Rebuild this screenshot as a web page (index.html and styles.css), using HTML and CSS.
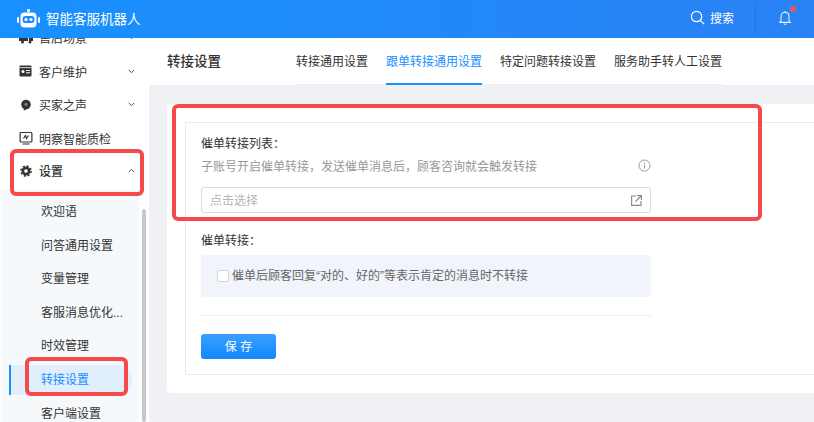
FILE: index.html
```html
<!DOCTYPE html>
<html lang="zh">
<head>
<meta charset="utf-8">
<title>智能客服机器人</title>
<link rel="stylesheet" href="styles.css">
</head>
<body>
<div class="app">
  <header class="topbar">
    <svg class="logo" width="24" height="24" viewBox="0 0 24 24"><rect x="11" y="2" width="3" height="3" rx="1" fill="#fff"/><rect x="4.500" y="5.500" width="16" height="15" rx="4" fill="#fff"/><rect x="1" y="10" width="2" height="6" rx="1" fill="#fff"/><rect x="22" y="10" width="2" height="6" rx="1" fill="#fff"/><rect x="6.500" y="9" width="12" height="7" rx="3" fill="#1b8cfb"/><circle cx="10" cy="12.500" r="1.600" fill="#fff"/><circle cx="15" cy="12.500" r="1.600" fill="#fff"/></svg>
    <span class="brand">智能客服机器人</span>
    <div class="search">
      <svg width="15" height="15" viewBox="0 0 16 16" fill="none" stroke="#fff" stroke-width="1.300"><circle cx="7" cy="7" r="5.500"/><path d="M11 11l4 4"/></svg>
      <span>搜索</span>
    </div>
    <div class="bell">
      <svg width="14" height="16" viewBox="0 0 16 18" fill="none" stroke="#e6f1ff" stroke-width="1.200"><path d="M8 2.500c-3 0-4.500 2.200-4.500 5V12L2 14h12l-1.500-2V7.500c0-2.800-1.500-5-4.500-5z"/><path d="M8 1v1.500M6.500 15.500c.4.800 2.600.800 3 0"/></svg>
      <i class="dot"></i>
    </div>
  </header>
  <div class="body">
    <aside class="sidebar">
      <nav class="menu">
        <a class="item"><svg class="ic" width="14" height="14" viewBox="0 0 14 14"><path d="M0 3h9v7H0zM10 5h3l1 2v3h-4z" fill="#333"/><circle cx="3.500" cy="11" r="1.500" fill="#333"/><circle cx="11" cy="11" r="1.500" fill="#333"/></svg><span>售后场景</span><svg class="chev" width="7" height="5" viewBox="0 0 9 6"><path d="M1 1l3.500 3.500L8 1" fill="none" stroke="#444" stroke-width="1.200"/></svg></a>
        <a class="item"><svg class="ic" width="14" height="14" viewBox="0 -.5 14 14"><rect x=".5" y="1" width="12" height="11" rx="1" fill="#333"/><rect x=".5" y="2.800" width="12" height=".8" fill="#fff"/><circle cx="4" cy="7" r="1.500" fill="#fff"/><rect x="7" y="5.500" width="4" height="1" fill="#fff"/><rect x="7" y="7.800" width="4" height="1" fill="#fff"/></svg><span>客户维护</span><svg class="chev" width="7" height="5" viewBox="0 0 9 6"><path d="M1 1l3.500 3.500L8 1" fill="none" stroke="#444" stroke-width="1.200"/></svg></a>
        <a class="item"><svg class="ic" width="14" height="14" viewBox="-1.500 -1.500 16 16"><circle cx="6.500" cy="6" r="5.500" fill="#333"/><path d="M4 10l0 3 3-2z" fill="#333"/><circle cx="6.500" cy="6" r="1.700" fill="#888"/></svg><span>买家之声</span><svg class="chev" width="7" height="5" viewBox="0 0 9 6"><path d="M1 1l3.500 3.500L8 1" fill="none" stroke="#444" stroke-width="1.200"/></svg></a>
        <a class="item"><svg class="ic" width="14" height="14" viewBox="-.5 -.5 14 14" fill="none" stroke="#333" stroke-width="1.200"><rect x=".6" y="1" width="11.800" height="9.500" rx="1"/><path d="M3 12.500h7M4 7l2-3 1 3 2-3"/></svg><span>明察智能质检</span></a>
        <a class="item open"><svg class="ic" width="14" height="14" viewBox="-1.500 -1.500 16 16"><circle cx="6.500" cy="6.500" r="3.600" fill="none" stroke="#333" stroke-width="3"/><circle cx="6.500" cy="6.500" r="5.800" fill="none" stroke="#333" stroke-width="1.600" stroke-dasharray="2.400 2.150"/></svg><span>设置</span><svg class="chev" width="7" height="5" viewBox="0 0 9 6"><path d="M1 5l3.500-3.500L8 5" fill="none" stroke="#444" stroke-width="1.200"/></svg></a>
        <div class="submenu">
          <a class="sub">欢迎语</a>
          <a class="sub">问答通用设置</a>
          <a class="sub">变量管理</a>
          <a class="sub">客服消息优化...</a>
          <a class="sub">时效管理</a>
          <a class="sub active">转接设置</a>
          <a class="sub">客户端设置</a>
        </div>
      </nav>
      <i class="scroll"></i>
    </aside>
    <main class="main">
      <div class="tabbar">
        <h1 class="title">转接设置</h1>
        <div class="tabs">
          <a class="tab">转接通用设置</a>
          <a class="tab on">跟单转接通用设置</a>
          <a class="tab">特定问题转接设置</a>
          <a class="tab">服务助手转人工设置</a>
        </div>
      </div>
      <section class="card">
        <div class="box">
          <div class="form">
            <div class="label">催单转接列表：</div>
            <div class="hint">
              <span>子账号开启催单转接，发送催单消息后，顾客咨询就会触发转接</span>
              <svg width="13" height="13" viewBox="0 0 13 13" fill="none" stroke="#999"><circle cx="6.500" cy="6.500" r="5.500"/><path d="M6.500 5.500v4M6.500 3.300v1.200"/></svg>
            </div>
            <div class="select">
              <span>点击选择</span>
              <svg width="11" height="11" viewBox="0 0 11 11" fill="none" stroke="#888" stroke-width="1.100"><path d="M5 1H.6v9.400H10V6M6 .6h4.400V5M10.200.8L4.500 6.500"/></svg>
            </div>
            <div class="label second">催单转接：</div>
            <div class="panel">
              <i class="check"></i>
              <span>催单后顾客回复“对的、好的”等表示肯定的消息时不转接</span>
            </div>
            <hr class="rule">
            <button class="save">保 存</button>
          </div>
        </div>
      </section>
    </main>
  </div>
  <i class="mark mark-form"></i>
  <i class="mark mark-set"></i>
  <i class="mark mark-sub"></i>
</div>
</body>
</html>
```

FILE: styles.css
```css
* { box-sizing: border-box; }
html, body { margin: 0; height: 100%; overflow: hidden; }
body { font-family: "Liberation Sans", "Noto Sans CJK SC", sans-serif; font-size: 12px; color: #333; }
a { display: block; }
.app { position: relative; width: 814px; height: 422px; overflow: hidden; display: flex; flex-direction: column; }

.topbar { flex: none; height: 38px; display: flex; align-items: center; padding-left: 16px; background: linear-gradient(90deg, #1890ff, #2a82f3); color: #fff; }
.logo { margin-right: 6px; }
.brand { font-size: 13.500px; padding-bottom: 3px; }
.search { margin-left: auto; display: flex; align-items: center; gap: 5px; font-size: 12px; padding-bottom: 3px; }
.bell { position: relative; width: 59px; height: 30px; margin-left: 21px; border-left: 1px solid #2376e0; display: flex; align-items: center; justify-content: center; padding-bottom: 3px; }
.dot { position: absolute; left: 34px; top: 2px; width: 6px; height: 6px; border-radius: 50%; background: #f5515f; }

.body { flex: 1; min-height: 0; display: flex; }
.sidebar { position: relative; flex: none; width: 149px; background: #fff; overflow: hidden; }
.menu { margin-top: -17px; }
.item { height: 33.500px; display: flex; align-items: center; padding-left: 19px; font-size: 12px; color: #333; }
.item .ic { flex: none; margin-right: 6px; }
.item span { flex: 1; }
.item .chev { margin-right: 14px; }
.open { font-weight: 500; height: 34px; padding-bottom: 3px; }
.submenu { padding-top: 7px; margin-left: 1px; width: 138px; background: #f6f9fc; }
.sub { height: 33.600px; line-height: 33.600px; padding-left: 40px; color: #333; }
.active { width: 123px; margin: 1px 0 3px 8px; padding-left: 30px; height: 30px; line-height: 30px; background: #e0eefd; color: #1890ff; border-radius: 0 15px 15px 0; border-left: 2px solid #1890ff; }
.scroll { position: absolute; left: 142px; top: 171px; width: 4px; height: 213px; border-radius: 2px; background: #c8c8c8; }

.main { flex: 1; min-width: 0; background: #f0f1f5; }
.tabbar { height: 47px; background: #fff; display: flex; align-items: center; padding-left: 18px; }
.title { margin: 0; width: 129px; font-size: 13.500px; font-weight: 500; color: #333; padding-bottom: 4px; }
.tabs { display: flex; height: 47px; gap: 18px; box-shadow: inset 0 -1px 0 #eceef2; }
.tab { line-height: 48px; height: 47px; font-size: 12px; color: #333; }
.on { color: #1890ff; border-bottom: 2px solid #1890ff; }
.card { margin: 19px 0 0 18px; height: 289px; background: #fff; border-radius: 4px 0 0 4px; padding: 18px 0 18px 18px; }
.box { height: 253px; border: 1px solid #eaeaea; border-right: 0; padding: 11px 0 0 15px; }
.form { width: 450px; }
.label { height: 18px; line-height: 20px; color: #333; }
.hint { display: flex; justify-content: space-between; align-items: center; height: 18px; margin-top: 4px; color: #999; }
.select { display: flex; justify-content: space-between; align-items: center; height: 26px; margin-top: 13px; border: 1px solid #dcdcdc; border-radius: 3px; padding: 0 8px; color: #b5b5b5; }
.select span { padding-bottom: 1px; }
.second { margin-top: 18px; }
.panel { display: flex; align-items: center; height: 42px; margin-top: 6px; padding-left: 16px; gap: 3px; background: #f1f4fb; border-radius: 3px; color: #666; }
.panel span { padding-bottom: 3px; }
.check { flex: none; width: 12px; height: 12px; background: #fff; border: 1px solid #d5d5d5; border-radius: 2px; }
.rule { margin: 18px 0 0; border: 0; border-top: 1px solid #eee; }
.save { display: block; width: 75px; height: 25px; margin-top: 18px; padding: 0 0 2px; border: 0; border-radius: 3px; background: linear-gradient(180deg, #3ba0ff, #1188ff); color: #fff; font: inherit; font-size: 12px; }

.mark { position: absolute; border: 4px solid #f54a4a; border-radius: 6px; pointer-events: none; }
.mark-form { left: 172px; top: 104px; width: 590px; height: 117px; }
.mark-set { left: 10px; top: 149px; width: 134px; height: 47px; }
.mark-sub { left: 25px; top: 357px; width: 103px; height: 39px; }
```
